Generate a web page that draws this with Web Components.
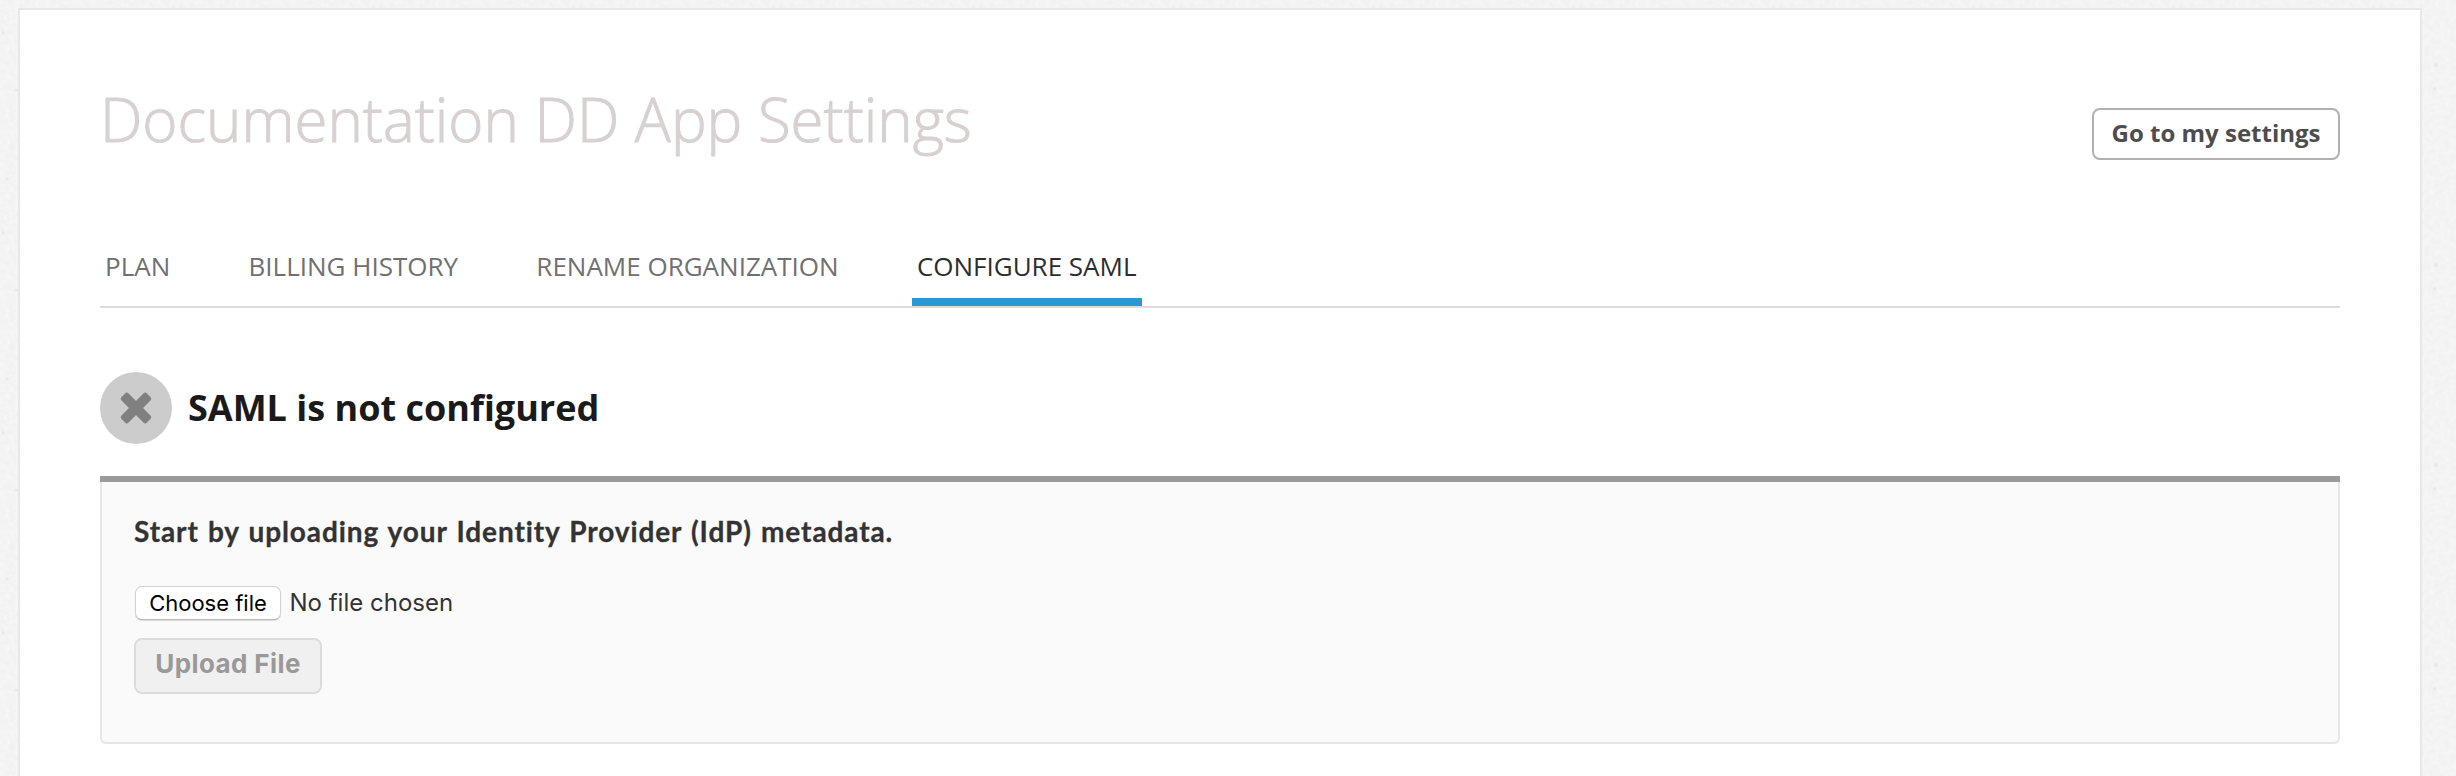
<!DOCTYPE html>
<html lang="en">
<head>
<meta charset="utf-8">
<title>Documentation DD App Settings</title>
<style>
html,body{margin:0;height:100%}
body{font-family:"Open Sans","Noto Sans",sans-serif;overflow:hidden}
</style>
</head>
<body>
<settings-page>
  <page-title slot="header">Documentation DD App Settings</page-title>
  <outline-button slot="header">Go to my settings</outline-button>
  <tab-bar>
    <tab-item>Plan</tab-item>
    <tab-item>Billing History</tab-item>
    <tab-item>Rename Organization</tab-item>
    <tab-item active>Configure SAML</tab-item>
  </tab-bar>
  <status-heading>SAML is not configured</status-heading>
  <upload-panel><span slot="lead">Start by uploading your Identity Provider (IdP) metadata.</span></upload-panel>
</settings-page>
<script>
const define = (name, html) => customElements.define(name, class extends HTMLElement {
  constructor() {
    super();
    this.attachShadow({ mode: 'open' }).innerHTML = html;
  }
});

define('settings-page', `
<style>
:host{display:grid;grid-template-columns:100vw;grid-template-rows:100vh;width:100vw;height:100vh;overflow:hidden;background:#f3f3f3}
.paper{grid-area:1/1;width:100%;height:100%;display:block}
main{grid-area:1/1;z-index:1;box-sizing:border-box;margin:8px 34px 0 18px;background:#fff;border:2px solid #e7e7e7;border-bottom:0;padding:67px 80px 0}
header{display:flex;justify-content:space-between;align-items:flex-start;height:155px}
</style>
<svg class="paper" aria-hidden="true">
  <defs>
    <filter id="grain" x="0" y="0" width="100%" height="100%" color-interpolation-filters="sRGB">
      <feTurbulence type="fractalNoise" baseFrequency="0.2" numOctaves="2" seed="4" stitchTiles="stitch"/>
      <feColorMatrix values="0.035 0 0 0 0.937  0.035 0 0 0 0.937  0.035 0 0 0 0.937  0 0 0 0 1"/>
    </filter>
    <pattern id="tile" width="200" height="200" patternUnits="userSpaceOnUse">
      <rect width="200" height="200" filter="url(#grain)"/>
      <g fill="#e8e8e8"><circle cx="36" cy="65" r="2"/><circle cx="34.500" cy="89" r="1.800"/><circle cx="3" cy="33" r="1.500"/><circle cx="16" cy="90" r="1.500"/><circle cx="7" cy="179" r="1.500"/></g>
    </pattern>
  </defs>
  <rect width="100%" height="100%" fill="url(#tile)"/>
</svg>
<main><header><slot name="header"></slot></header><slot></slot></main>`);

define('page-title', `
<style>
:host{display:block}
h1{margin:0;font-size:60px;line-height:84px;font-weight:300;color:#d8d1d1;white-space:nowrap;-webkit-text-stroke:1px #d8d1d1}
</style><h1><slot></slot></h1>`);

define('outline-button', `
<style>
:host{display:block;margin-top:31px}
button{display:block;box-sizing:border-box;width:248px;height:52px;border:2px solid #b1b1b1;border-radius:8px;background:#fff;padding:0 0 2px;font:700 24px/46px "Open Sans",sans-serif;color:#4d4d4d;text-align:center;white-space:nowrap}
</style><button><slot></slot></button>`);

define('tab-bar', `
<style>
:host{display:block;border-bottom:2px solid #dcdcdc}
nav{display:flex;gap:68.300px;height:74px}
</style><nav><slot></slot></nav>`);

define('tab-item', `
<style>
:host{display:block;box-sizing:border-box;height:74px;padding:0 5px;font-size:26px;line-height:68px;text-transform:uppercase;white-space:nowrap;color:#707070}
:host([active]){color:#2d2d2d;border-bottom:8px solid #2c98d0}
</style><slot></slot>`);

define('status-heading', `
<style>
:host{display:flex;align-items:center;gap:16px;height:72px;margin-top:64px}
svg{flex:none}
h2{margin:0;font-size:36px;line-height:72px;font-weight:700;color:#1a1a1a;white-space:nowrap}
</style>
<svg width="72" height="72" viewBox="0 0 72 72" aria-hidden="true">
  <circle cx="36" cy="36" r="36" fill="#ccc"/>
  <g transform="rotate(45 36 36)" fill="#808080"><rect x="18" y="31" width="36" height="10" rx="2.500"/><rect x="31" y="18" width="10" height="36" rx="2.500"/></g>
</svg>
<h2><slot></slot></h2>`);

define('upload-panel', `
<style>
:host{display:block;box-sizing:border-box;margin-top:32px;height:268px;background:#fafafa;border-top:6px solid #9a9a9a;border-radius:0 0 6px 6px}
section{box-sizing:border-box;height:262px;border:2px solid #e6e6e6;border-top:0;border-radius:0 0 6px 6px;padding:30px 32px 0}
p{margin:0;font:700 28px/38px Lato,sans-serif;color:#333;white-space:nowrap;letter-spacing:.9px;word-spacing:1.500px;-webkit-text-stroke:.3px #333}
.file{display:flex;align-items:center;gap:8.500px;margin:36px 0 18px 1px;height:34px;font:24px/34px Inter,sans-serif;color:#333;white-space:nowrap}
.choose{box-sizing:border-box;width:146px;height:34px;padding:0;border:1px solid #d2d2d2;border-bottom-color:#b9b9b9;border-radius:7px;background:#fff;box-shadow:0 1px 1px #0002;font:22px/32px Inter,sans-serif;color:#000;white-space:nowrap}
.upload{display:block;box-sizing:border-box;width:188px;height:56px;padding:0 0 4px;border:2px solid #dcdcdc;border-radius:8px;background:#f0f0f0;font:700 26px/48px Inter,sans-serif;letter-spacing:.4px;color:#999;white-space:nowrap}
</style>
<section>
  <p><slot name="lead"></slot></p>
  <div class="file"><button class="choose">Choose file</button><span>No file chosen</span></div>
  <button class="upload" disabled>Upload File</button>
</section>`);
</script>
</body>
</html>
